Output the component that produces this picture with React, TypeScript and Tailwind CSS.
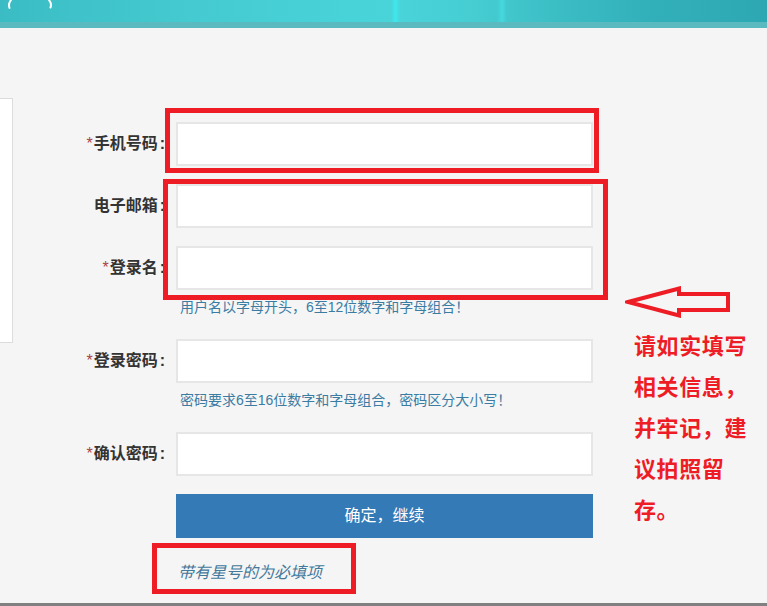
import React from "react";

const RED = "border-[#ee1c25]";

function Row({
  label,
  required,
  hint,
}: {
  label: string;
  required?: boolean;
  hint?: string;
}) {
  return (
    <div className="flex items-start mb-[18px]">
      <label className="w-[153px] h-[44px] shrink-0 flex items-center justify-end pr-[1px] text-[16px] font-bold text-[#333333]">
        {required && <span className="font-normal text-[#a94442] mr-[1px]">*</span>}
        <span>{label}</span>
        <span className="ml-[2px]">:</span>
      </label>
      <div className="ml-[10px] w-[417px]">
        <input
          className="block h-[44px] w-full border-2 border-[#e6e6e6] bg-white outline-none"
          type="text"
        />
        {hint && (
          <p className="h-[31px] pt-[8px] pl-[4px] text-[14px] leading-[18px] text-[#3b7ca3]">{hint}</p>
        )}
      </div>
    </div>
  );
}

export default function App() {
  return (
    <div className="w-[767px] h-[606px] overflow-hidden bg-[#f5f5f5] flex flex-col font-['Liberation_Sans','Noto_Sans_CJK_SC',sans-serif]">
      <header className="relative h-[22px] shrink-0 bg-[linear-gradient(90deg,#3bbcc4_0%,#3fc2c9_10%,#44cad0_25%,#48d3d8_45%,#49d4d9_52%,#45cdd2_62%,#3cbec5_72%,#32b0ba_85%,#2da8b2_100%)]">
        <div className="absolute left-[391px] top-0 h-full w-[9px] bg-[linear-gradient(90deg,transparent,#3ee8ec,transparent)]" />
        <div className="absolute left-[497px] top-0 h-full w-[10px] bg-[linear-gradient(90deg,transparent,#44d9de,transparent)]" />
        <svg className="absolute left-0 top-0" width="60" height="22" viewBox="0 0 60 22">
          <path d="M11 0 Q8 4 9.5 8" stroke="#ffffff" strokeWidth="2" fill="none" strokeLinecap="round" />
          <path d="M49 0 Q52 4 50.5 7.5" stroke="#ffffff" strokeWidth="2" fill="none" strokeLinecap="round" />
        </svg>
      </header>
      <div className="h-[6px] shrink-0 bg-[#5bbac0]" />

      <main className="relative flex flex-1">
        <aside className="mt-[70px] h-[245px] w-[13px] shrink-0 border border-l-0 border-[#dcdcdc] bg-white" />

        <div className="w-[580px] shrink-0 pt-[94px]">
          <Row label="手机号码" required />
          <Row label="电子邮箱" />
          <Row label="登录名" required hint="用户名以字母开头，6至12位数字和字母组合！" />
          <Row label="登录密码" required hint="密码要求6至16位数字和字母组合，密码区分大小写！" />
          <Row label="确认密码" required />
          <button className="ml-[163px] block h-[44px] w-[417px] bg-[#337ab7] text-[16px] text-white">
            确定，继续
          </button>
          <p className="ml-[165px] mt-[24px] text-[16px] leading-[22px] italic text-[#44799c]">带有星号的为必填项</p>
        </div>

        <div className="ml-[32px] flex flex-col">
          <svg className="mt-[258px]" width="106" height="32" viewBox="0 0 106 32">
            <polygon
              points="3,16 54,2.5 54,8 103,8 103,24 54,24 54,29.5"
              fill="none"
              stroke="#ee1c25"
              strokeWidth="4"
              strokeLinejoin="miter"
            />
          </svg>
          <div className="mt-[8px] ml-[9px] text-[22px] leading-[41px] font-bold tracking-[0.6px] text-[#ee1c25]">
            <div>请如实填写</div>
            <div>相关信息，</div>
            <div>并牢记，建</div>
            <div>议拍照留</div>
            <div>存。</div>
          </div>
        </div>

        <div className={`absolute left-[165px] top-[80px] h-[65px] w-[434px] border-[5px] ${RED}`} />
        <div className={`absolute left-[163px] top-[151px] h-[121px] w-[445px] border-[5px] ${RED}`} />
        <div className={`absolute left-[152px] top-[515px] h-[51px] w-[204px] border-[5px] ${RED}`} />
      </main>
      <div className="h-[3px] shrink-0 bg-[#808080]" />
    </div>
  );
}
